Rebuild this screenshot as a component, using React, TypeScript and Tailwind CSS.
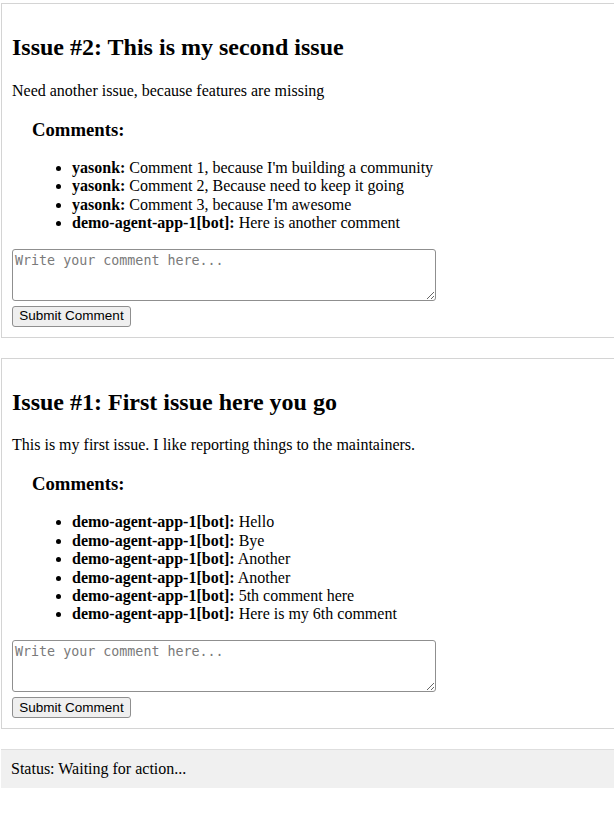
import React from 'react';

interface Comment {
  user: string;
  body: string;
}

interface Issue {
  number: number;
  title: string;
  body: string;
  comments: Comment[];
}

const issues: Issue[] = [
  {
    number: 2,
    title: 'This is my second issue',
    body: 'Need another issue, because features are missing',
    comments: [
      { user: 'yasonk', body: "Comment 1, because I'm building a community" },
      { user: 'yasonk', body: 'Comment 2, Because need to keep it going' },
      { user: 'yasonk', body: "Comment 3, because I'm awesome" },
      { user: 'demo-agent-app-1[bot]', body: 'Here is another comment' },
    ],
  },
  {
    number: 1,
    title: 'First issue here you go',
    body: 'This is my first issue. I like reporting things to the maintainers.',
    comments: [
      { user: 'demo-agent-app-1[bot]', body: 'Hello' },
      { user: 'demo-agent-app-1[bot]', body: 'Bye' },
      { user: 'demo-agent-app-1[bot]', body: 'Another' },
      { user: 'demo-agent-app-1[bot]', body: 'Another' },
      { user: 'demo-agent-app-1[bot]', body: '5th comment here' },
      { user: 'demo-agent-app-1[bot]', body: 'Here is my 6th comment' },
    ],
  },
];

const IssueCard: React.FC<{ issue: Issue }> = ({ issue }) => (
  <div className="border border-[#d4d4d4] p-[10px] mb-[20px]">
    <h2 className="text-[24px] font-bold my-[20px] leading-[1.15]">
      Issue #{issue.number}: {issue.title}
    </h2>
    <p className="my-[16px]">{issue.body}</p>

    {/* Comments */}
    <div className="ml-[20px]">
      <h3 className="text-[18.72px] font-bold my-[18.72px] leading-[1.15]">Comments:</h3>
      <ul className="list-disc pl-[40px] my-[16px]">
        {issue.comments.map((c, i) => (
          <li key={i}>
            <strong>{c.user}:</strong> {c.body}
          </li>
        ))}
      </ul>
    </div>

    <textarea
      className="block w-[424px] h-[52px] border border-[#8f8f8f] rounded-[3px] px-[2px] pt-[3px] text-[13.33px] leading-[1.15] font-['DejaVu_Sans_Mono',monospace] placeholder:text-[#7a7a7a]"
      placeholder="Write your comment here..."
    />
    <button className="block mt-[5px] w-[119px] h-[21px] border border-[#8f8f8f] rounded-[3px] bg-[#efefef] text-[13.5px] leading-none font-['Liberation_Sans',Arial,sans-serif] text-black">
      Submit Comment
    </button>
  </div>
);

export default function App() {
  return (
    <div className="w-[614px] min-h-[824px] overflow-hidden bg-white pt-[3px] pl-[1px] font-['Liberation_Serif','Times_New_Roman',serif] text-[16px] leading-[1.15] text-black">
      <div className="w-[640px]">
        {issues.map((issue) => (
          <IssueCard key={issue.number} issue={issue} />
        ))}
        <div className="bg-[#f0f0f0] border-t border-[#dedede] p-[10px]">Status: Waiting for action...</div>
      </div>
    </div>
  );
}
